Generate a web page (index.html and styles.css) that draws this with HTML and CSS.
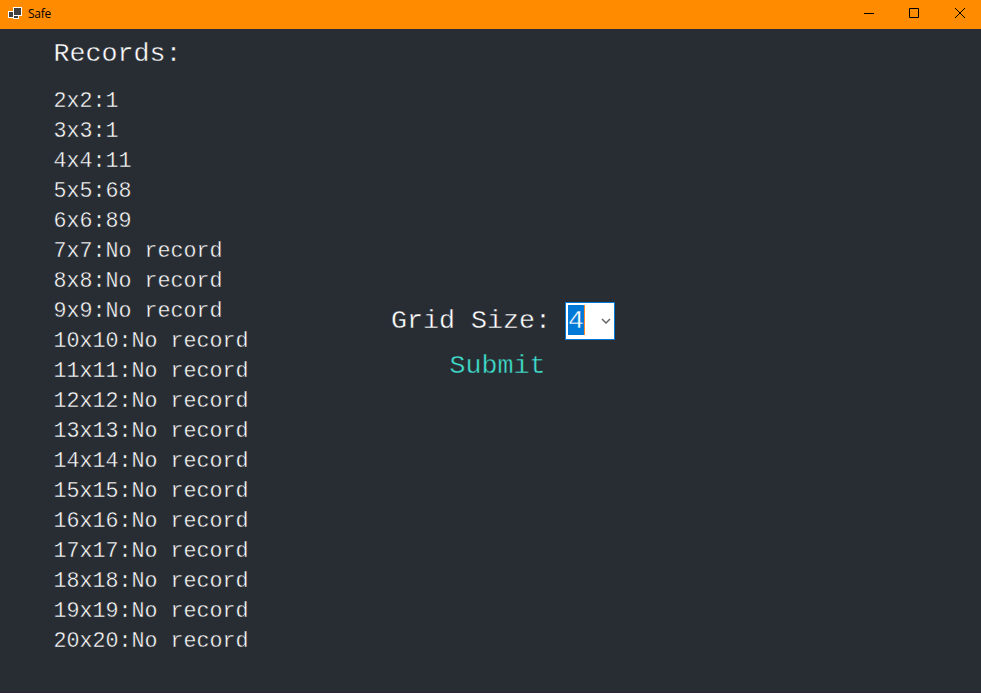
FILE: index.html
```html
<!DOCTYPE html>
<html lang="en">
<head>
<meta charset="utf-8">
<title>Safe</title>
<link rel="stylesheet" href="styles.css">
</head>
<body>
<header class="titlebar">
  <svg class="app-icon" width="16" height="16" viewBox="0 0 16 16"><path d="M6 0h9v9h-3v3H6v-1H1V4h5z" fill="#fff"/><path d="M7 1h7v7H7zM2 5h4v5H2zM7 9h4v2H7z" fill="#404040"/></svg>
  <span class="title">Safe</span>
  <div class="controls">
    <svg width="45" height="29" viewBox="0 0 45 29"><path d="M18 13.500h10"/></svg>
    <svg width="46" height="29" viewBox="0 0 46 29"><path d="M18.500 8.500h9v9h-9z"/></svg>
    <svg width="44" height="29" viewBox="0 0 44 29"><path d="M18 8l10 10M28 8l-10 10"/></svg>
  </div>
</header>
<main class="content">
  <section class="records">
    <h1>Records:</h1>
    <ul>
      <li>2x2:1</li><li>3x3:1</li><li>4x4:11</li><li>5x5:68</li><li>6x6:89</li>
      <li>7x7:No record</li><li>8x8:No record</li><li>9x9:No record</li><li>10x10:No record</li><li>11x11:No record</li><li>12x12:No record</li><li>13x13:No record</li><li>14x14:No record</li><li>15x15:No record</li><li>16x16:No record</li><li>17x17:No record</li><li>18x18:No record</li><li>19x19:No record</li><li>20x20:No record</li>
    </ul>
  </section>
  <section class="setup">
    <div class="field"><span class="label">Grid Size:</span>
      <div class="combo"><span class="value">4</span><svg width="10" height="6" viewBox="0 0 10 6"><path d="M1 1l4 4 4-4"/></svg></div>
    </div>
    <div class="submit">Submit</div>
  </section>
</main>
</body>
</html>
```

FILE: styles.css
```css
* { box-sizing: border-box; }
body { margin: 0; height: 693px; background: #282c33; color: #fff; font-family: "Liberation Mono", monospace; overflow: hidden; }
.titlebar { height: 29px; background: #ff8c00; display: flex; align-items: center; padding-left: 7px; color: #000; }
.app-icon { margin-top: 1px; }
.title { font: 12px/16px "Open Sans", sans-serif; margin: 0 0 1px 5px; letter-spacing: -0.3px; }
.controls { display: flex; margin-left: auto; }
.controls path { fill: none; stroke: #000; }
.content { display: flex; height: 664px; border-bottom: 1px solid #2b2233; -webkit-text-stroke: 0.4px #282c33; }
.records { width: 391px; padding-left: 53.5px; }
h1 { margin: 9px 0 0; font-size: 26.67px; font-weight: 400; line-height: 32px; }
ul { list-style: none; margin: 17px 0 0; padding: 0; }
li { font-size: 21.67px; line-height: 30px; height: 30px; white-space: pre; }
.setup { padding-top: 273px; font-size: 26.67px; }
.field { display: flex; align-items: center; height: 38px; }
.label { width: 174px; line-height: 30px; }
.combo { width: 50px; height: 38px; background: #fff; border: 1px solid #0078d7; display: flex; align-items: center; padding-left: 2px; }
.value { background: #0078d7; border-right: 1px solid #ff8728; height: 30px; line-height: 32px; width: 17px; margin-bottom: 2px; -webkit-text-stroke-color: #0078d7; }
.combo svg { margin-left: 16px; }
.combo path { fill: none; stroke: #666; stroke-width: 1.5; }
.submit { margin: 10px 0 0 58.5px; line-height: 32px; color: #40e0d0; }
```
